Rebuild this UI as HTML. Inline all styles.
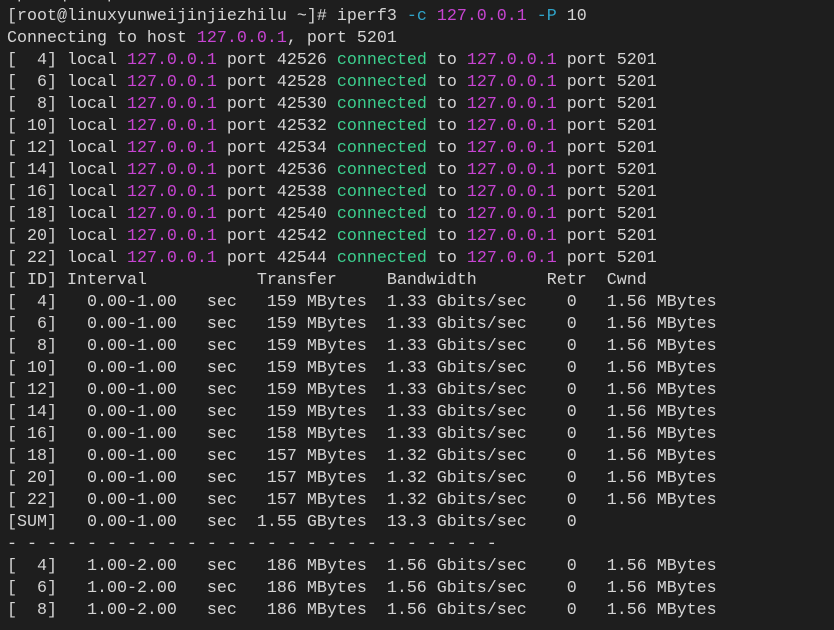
<!DOCTYPE html>
<html><head><meta charset="utf-8"><style>
html,body{margin:0;padding:0;background:#1e1e1e;width:834px;height:630px;overflow:hidden}
pre{position:absolute;left:7px;top:-16px;margin:0;font-family:"Liberation Mono",monospace;font-size:16.67px;line-height:22px;color:#d4d4d4;white-space:pre}
.m{color:#c744d2}.g{color:#3ccf8e}.b{color:#2fa3c8}
.u{text-decoration:underline}
</style></head><body>
<pre>rpm -qa  <span class="u">iperf3-3.1.7-2.el7.x86_64</span>
[root@linuxyunweijinjiezhilu ~]# iperf3 <span class="b">-c</span> <span class="m">127.0.0.1</span> <span class="b">-P</span> 10
Connecting to host <span class="m">127.0.0.1</span>, port 5201
[  4] local <span class="m">127.0.0.1</span> port 42526 <span class="g">connected</span> to <span class="m">127.0.0.1</span> port 5201
[  6] local <span class="m">127.0.0.1</span> port 42528 <span class="g">connected</span> to <span class="m">127.0.0.1</span> port 5201
[  8] local <span class="m">127.0.0.1</span> port 42530 <span class="g">connected</span> to <span class="m">127.0.0.1</span> port 5201
[ 10] local <span class="m">127.0.0.1</span> port 42532 <span class="g">connected</span> to <span class="m">127.0.0.1</span> port 5201
[ 12] local <span class="m">127.0.0.1</span> port 42534 <span class="g">connected</span> to <span class="m">127.0.0.1</span> port 5201
[ 14] local <span class="m">127.0.0.1</span> port 42536 <span class="g">connected</span> to <span class="m">127.0.0.1</span> port 5201
[ 16] local <span class="m">127.0.0.1</span> port 42538 <span class="g">connected</span> to <span class="m">127.0.0.1</span> port 5201
[ 18] local <span class="m">127.0.0.1</span> port 42540 <span class="g">connected</span> to <span class="m">127.0.0.1</span> port 5201
[ 20] local <span class="m">127.0.0.1</span> port 42542 <span class="g">connected</span> to <span class="m">127.0.0.1</span> port 5201
[ 22] local <span class="m">127.0.0.1</span> port 42544 <span class="g">connected</span> to <span class="m">127.0.0.1</span> port 5201
[ ID] Interval           Transfer     Bandwidth       Retr  Cwnd
[  4]   0.00-1.00   sec   159 MBytes  1.33 Gbits/sec    0   1.56 MBytes
[  6]   0.00-1.00   sec   159 MBytes  1.33 Gbits/sec    0   1.56 MBytes
[  8]   0.00-1.00   sec   159 MBytes  1.33 Gbits/sec    0   1.56 MBytes
[ 10]   0.00-1.00   sec   159 MBytes  1.33 Gbits/sec    0   1.56 MBytes
[ 12]   0.00-1.00   sec   159 MBytes  1.33 Gbits/sec    0   1.56 MBytes
[ 14]   0.00-1.00   sec   159 MBytes  1.33 Gbits/sec    0   1.56 MBytes
[ 16]   0.00-1.00   sec   158 MBytes  1.33 Gbits/sec    0   1.56 MBytes
[ 18]   0.00-1.00   sec   157 MBytes  1.32 Gbits/sec    0   1.56 MBytes
[ 20]   0.00-1.00   sec   157 MBytes  1.32 Gbits/sec    0   1.56 MBytes
[ 22]   0.00-1.00   sec   157 MBytes  1.32 Gbits/sec    0   1.56 MBytes
[SUM]   0.00-1.00   sec  1.55 GBytes  13.3 Gbits/sec    0
- - - - - - - - - - - - - - - - - - - - - - - - -
[  4]   1.00-2.00   sec   186 MBytes  1.56 Gbits/sec    0   1.56 MBytes
[  6]   1.00-2.00   sec   186 MBytes  1.56 Gbits/sec    0   1.56 MBytes
[  8]   1.00-2.00   sec   186 MBytes  1.56 Gbits/sec    0   1.56 MBytes
</pre>
</body></html>
